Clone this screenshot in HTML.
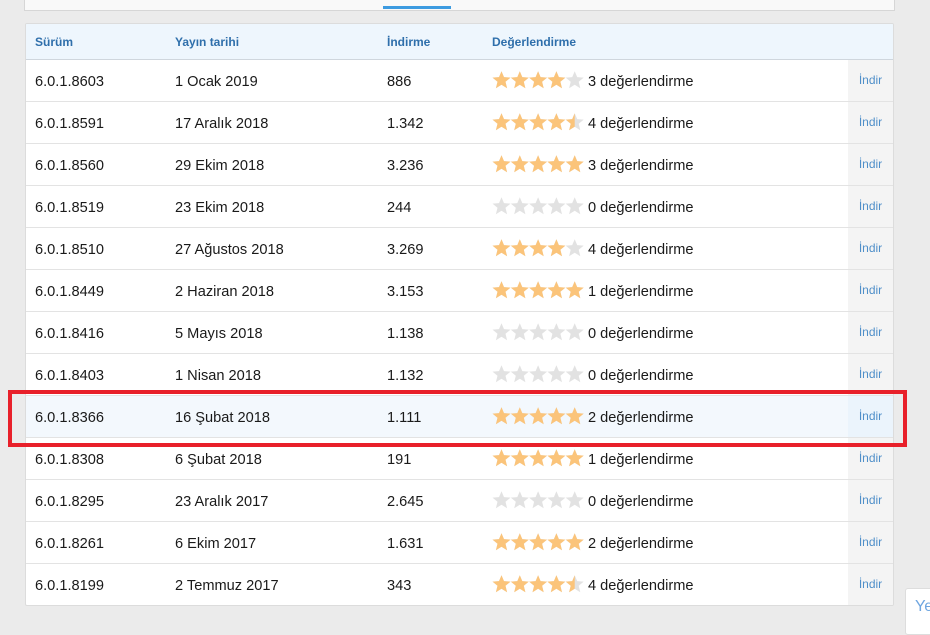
<!DOCTYPE html><html><head><style>
body{margin:0;width:930px;height:628px;background:#ebebeb;font-family:"Liberation Sans",sans-serif;position:relative;overflow:hidden}
.tabs{position:absolute;left:24px;top:-2px;width:869px;height:12px;background:#f9f9f9;border:1px solid #d6d6d6;border-top:none}
.tabs .ul{position:absolute;left:358px;top:8px;width:68px;height:3px;background:#3d9be0}
.card{position:absolute;left:25px;top:23px;width:867px;height:581px;background:#fff;border:1px solid #dcdcdc;border-radius:2px;overflow:hidden}
.hd{height:35px;background:#eef6fd;border-bottom:1px solid #cfd6dd;position:relative;font-size:12px;font-weight:bold;color:#2f6fab}
.row{height:41px;border-bottom:1px solid #e3e3e3;position:relative;font-size:14.6px;color:#1a1a1a}
.row:last-child{border-bottom:none}
.c{position:absolute;top:0;line-height:41px}
.row .c,.row .rt{top:2px}
.hd .c{line-height:37px}
.dl{position:absolute;left:822px;top:0;width:45px;height:100%;background:#f4f4f4;font-size:12px;color:#4f8fc9;line-height:41px;text-align:center}
.hl{background:#f3f8fd}.hl .dl{background:#ebf4fc}
.st{position:absolute;left:466px;top:11px;height:19px}
.rt{position:absolute;left:562px;line-height:41px}
.red{position:absolute;left:8px;top:390px;width:891px;height:49px;border:4px solid #e8202a}
.ye{position:absolute;left:905px;top:588px;width:40px;height:45px;background:#fff;border:1px solid #ddd;border-radius:3px;color:#6fa6e0;font-size:16px;line-height:36px;padding-left:9px}
</style></head><body>
<div class="tabs"><div class="ul"></div></div>
<div class="card">
<div class="hd"><span class="c" style="left:9px">Sürüm</span><span class="c" style="left:149px">Yayın tarihi</span><span class="c" style="left:361px">İndirme</span><span class="c" style="left:466px">Değerlendirme</span></div>
<div id="rows"></div>
</div>
<div class="red"></div>
<div class="ye">Ye</div>
<script>
var d=[["6.0.1.8603","1 Ocak 2019","886",4,3],["6.0.1.8591","17 Aralık 2018","1.342",4.5,4],["6.0.1.8560","29 Ekim 2018","3.236",5,3],["6.0.1.8519","23 Ekim 2018","244",0,0],["6.0.1.8510","27 Ağustos 2018","3.269",4,4],["6.0.1.8449","2 Haziran 2018","3.153",5,1],["6.0.1.8416","5 Mayıs 2018","1.138",0,0],["6.0.1.8403","1 Nisan 2018","1.132",0,0],["6.0.1.8366","16 Şubat 2018","1.111",5,2],["6.0.1.8308","6 Şubat 2018","191",5,1],["6.0.1.8295","23 Aralık 2017","2.645",0,0],["6.0.1.8261","6 Ekim 2017","1.631",5,2],["6.0.1.8199","2 Temmuz 2017","343",4.5,4]];
var P="M9.5 0.3L12 6.1 18.5 6.6 13.5 10.8 15.1 17.2 9.5 13.7 3.9 17.2 5.5 10.8 0.5 6.6 7 6.1Z";
var h="";d.forEach(function(r,i){var s='<svg class="st" width="94" height="19"><defs><clipPath id="h'+i+'"><rect x="0" y="0" width="9.5" height="19"/></clipPath></defs>';
for(var k=0;k<5;k++){var x=k*18.3;s+='<g transform="translate('+x+',0)"><path d="'+P+'" fill="#e2e2e2"/>';if(r[3]>=k+1)s+='<path d="'+P+'" fill="#fbc47a"/>';else if(r[3]>k)s+='<path d="'+P+'" fill="#fbc47a" clip-path="url(#h'+i+')"/>';s+='</g>'}s+='</svg>';
h+='<div class="row'+(i==8?' hl':'')+'"><span class="c" style="left:9px">'+r[0]+'</span><span class="c" style="left:149px">'+r[1]+'</span><span class="c" style="left:361px">'+r[2]+'</span>'+s+'<span class="rt">'+r[4]+' değerlendirme</span><div class="dl">İndir</div></div>'});
document.getElementById("rows").innerHTML=h;
</script>
</body></html>
